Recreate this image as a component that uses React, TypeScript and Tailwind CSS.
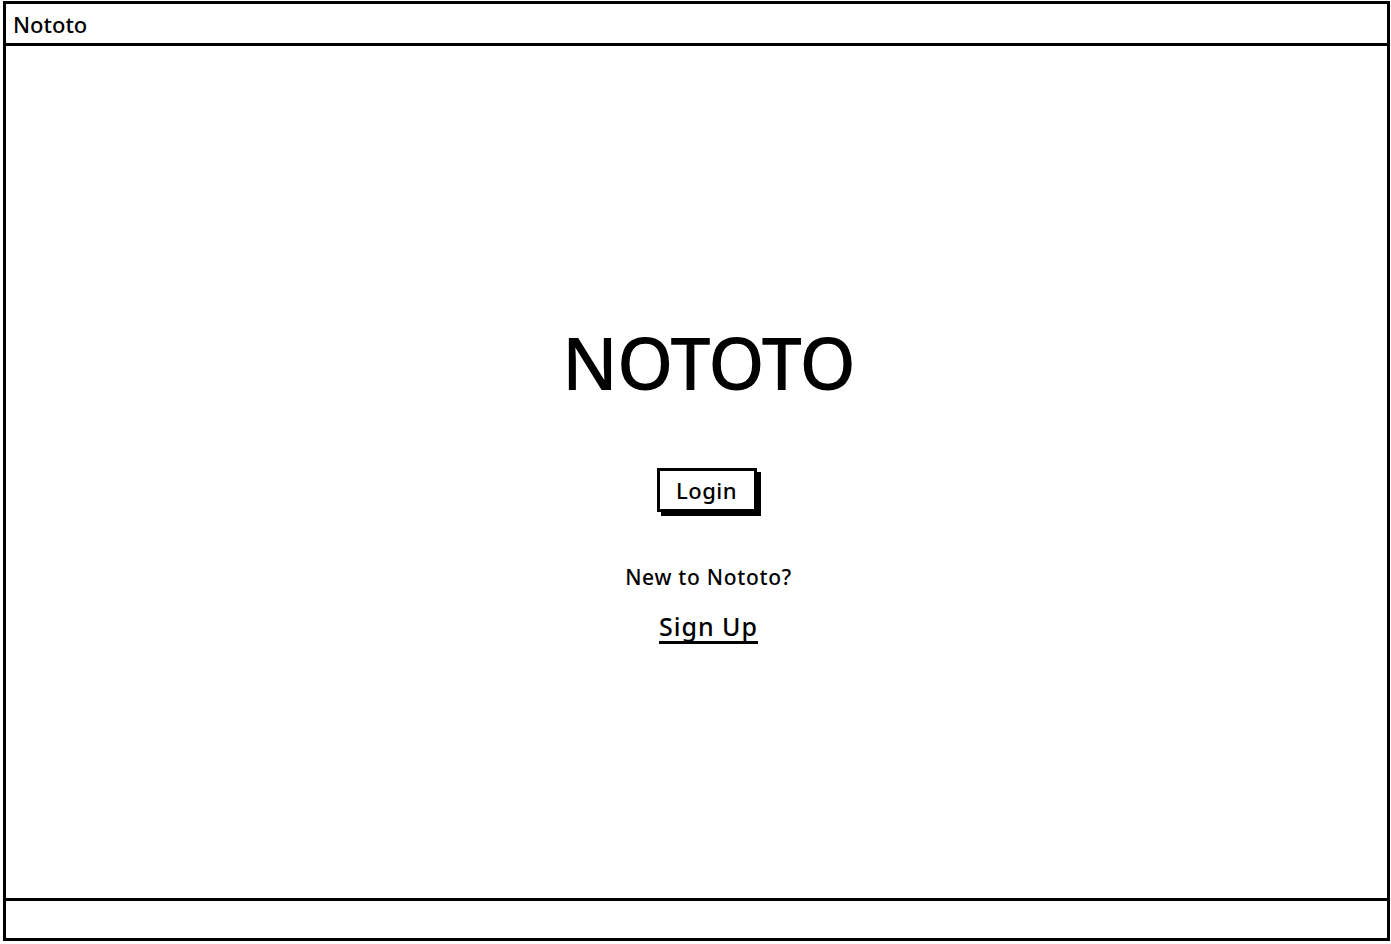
import React from "react";

export default function App() {
  return (
    <div
      className="w-[1391px] h-[944px] bg-white pl-[3px] pr-[1px] pt-[1px] pb-[3px] text-black"
      style={{ fontFamily: '"Noto Sans", "Liberation Sans", sans-serif' }}
    >
      <div className="h-full border-[3px] border-black flex flex-col">
        <div className="h-[42px] border-b-[3px] border-black flex items-center pl-[7px] text-[22px] leading-none font-medium">
          Nototo
        </div>
        <div className="flex-1 flex flex-col items-center pl-[24px]">
          <div className="mt-[280px] text-[72px] leading-[72px] font-medium tracking-[-1px]">NOTOTO</div>
          <div className="mt-[70px] relative w-[104px] h-[48px]">
            <div className="absolute left-[4px] top-[4px] w-[100px] h-[44px] bg-black" />
            <button className="absolute left-0 top-0 w-[100px] h-[44px] border-[3px] border-black bg-white text-[22px] leading-none font-medium tracking-[0.5px] flex items-center justify-center">
              Login
            </button>
          </div>
          <div className="mt-[47px] text-[21px] leading-[29px] font-medium tracking-[0.7px]">New to Nototo?</div>
          <div className="mt-[19px] text-[25px] leading-[30px] font-medium tracking-[1px] border-b-[3px] border-black">Sign Up</div>
        </div>
        <div className="h-[40px] border-t-[3px] border-black" />
      </div>
    </div>
  );
}
